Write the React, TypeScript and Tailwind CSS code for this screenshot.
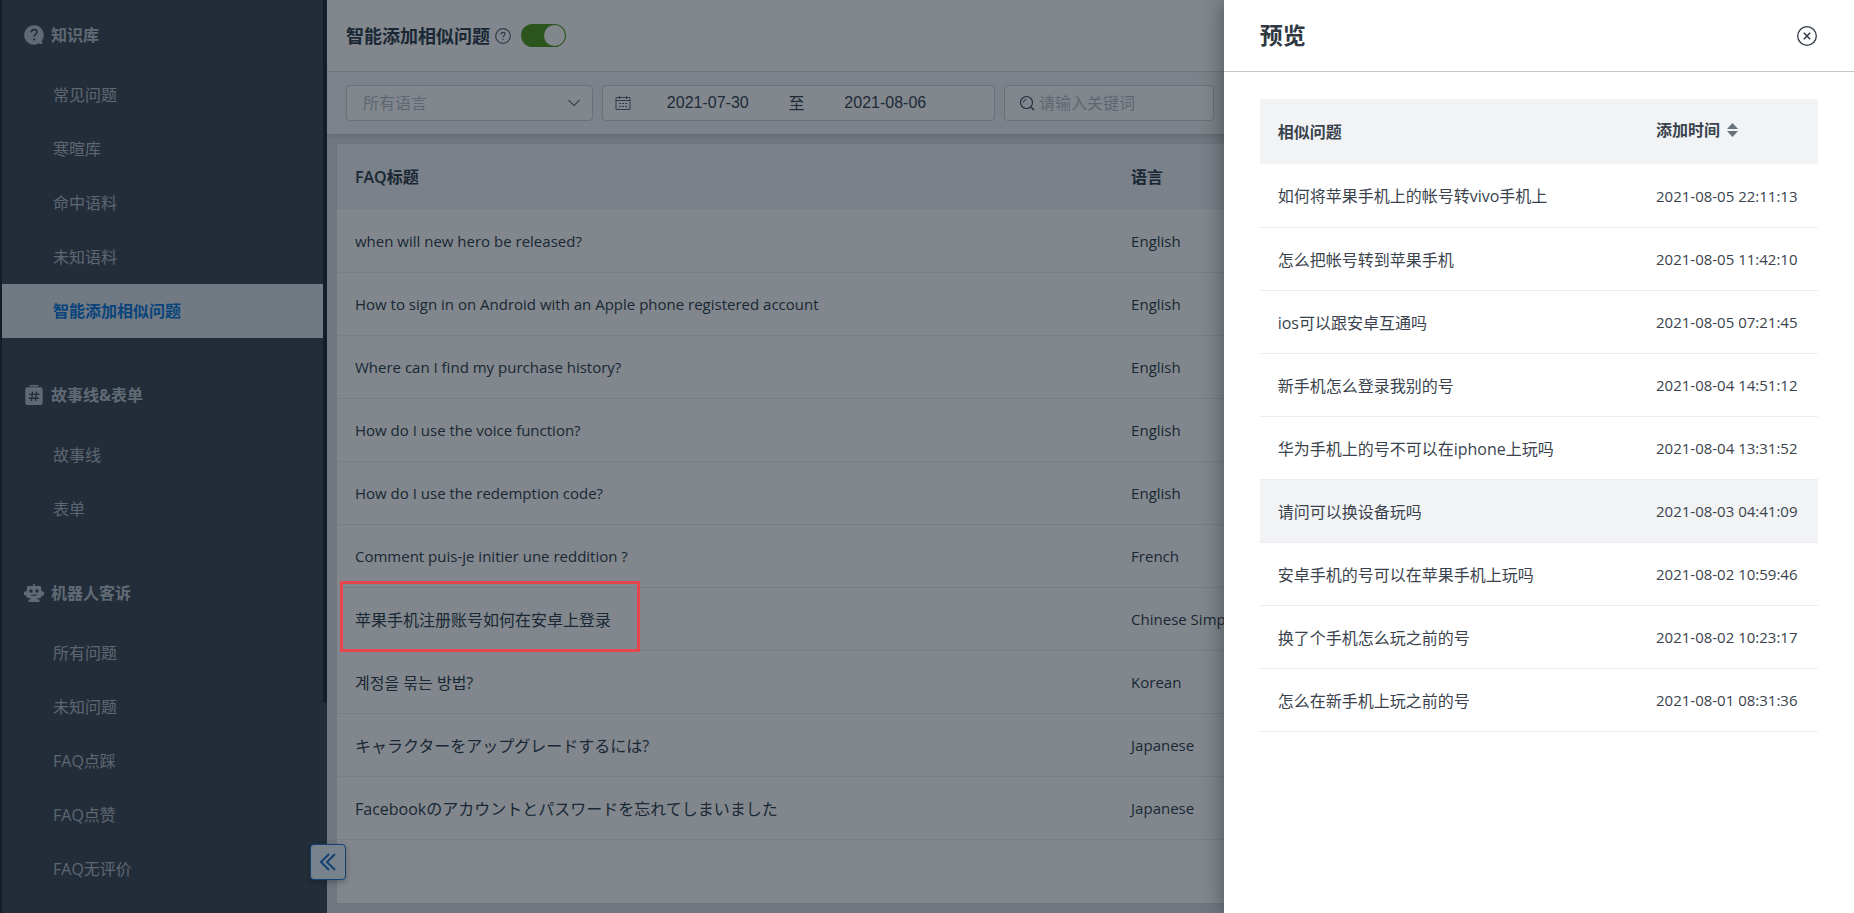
import React, { useState } from "react";

interface NavGroup {
  title: string;
  icon: React.ReactNode;
  items: string[];
}

interface FaqRow {
  title: string;
  language: string;
  cjk?: boolean;
  marked?: boolean;
}

const QuestionIcon = () => (
  <svg viewBox="0 0 20 20" className="size-5 shrink-0" aria-hidden="true">
    <path fill="currentColor" d="M10 .3a9.7 9.7 0 1 0 4.6 18.2l3.9.8-.7-3.5A9.7 9.7 0 0 0 10 .3z" />
    <path d="M7.2 7.4C7.3 5.6 8.4 4.6 10.1 4.6c1.700 0 2.900 1 2.900 2.500 0 2.200-2.900 2.300-2.900 4.500" fill="none" stroke="#424b56" strokeWidth="1.6" />
    <circle cx="10.1" cy="14.4" r="1.1" fill="#424b56" />
  </svg>
);

const StoryIcon = () => (
  <svg viewBox="0 0 20 20" className="size-5 shrink-0" aria-hidden="true">
    <path fill="currentColor" d="M5.500 0h9v1.600h-9zM3.500 2.300h13A2.200 2.200 0 0 1 18.700 4.500v13.300A2.200 2.200 0 0 1 16.500 20h-13a2.200 2.200 0 0 1-2.200-2.200V4.500a2.200 2.200 0 0 1 2.200-2.200z" />
    <path d="M8.600 6.500 7.400 16M12.700 6.500 11.500 16M5 9.400h10.500M4.600 13.200h10.500" fill="none" stroke="#424b56" strokeWidth="1.4" />
  </svg>
);

const RobotIcon = () => (
  <svg viewBox="0 0 20 20" className="size-5 shrink-0" aria-hidden="true">
    <path fill="currentColor" d="M9.200 1h1.600v2H16a1 1 0 0 1 1 1v3.600h1.200v1.200H20v3.400h-1.800v1.200H17V14a1 1 0 0 1-1 1h-2.400v1.600h1.900V19h-11v-2.400h1.900V15H4a1 1 0 0 1-1-1v-.6H1.800v-1.200H0V8.800h1.800V7.600H3V4a1 1 0 0 1 1-1h5.200z" />
    <circle cx="7" cy="8" r="1.7" fill="#424b56" />
    <circle cx="13" cy="8" r="1.7" fill="#424b56" />
    <path d="M7 12.200h6" stroke="#424b56" strokeWidth="1" />
  </svg>
);

const navGroups: NavGroup[] = [
  {
    title: "知识库",
    icon: <QuestionIcon />,
    items: ["常见问题", "寒暄库", "命中语料", "未知语料", "智能添加相似问题"],
  },
  { title: "故事线&表单", icon: <StoryIcon />, items: ["故事线", "表单"] },
  {
    title: "机器人客诉",
    icon: <RobotIcon />,
    items: ["所有问题", "未知问题", "FAQ点踩", "FAQ点赞", "FAQ无评价"],
  },
];

const faqRows: FaqRow[] = [
  { title: "when will new hero be released?", language: "English" },
  { title: "How to sign in on Android with an Apple phone registered account", language: "English" },
  { title: "Where can I find my purchase history?", language: "English" },
  { title: "How do I use the voice function?", language: "English" },
  { title: "How do I use the redemption code?", language: "English" },
  { title: "Comment puis-je initier une reddition ?", language: "French" },
  { title: "苹果手机注册账号如何在安卓上登录", language: "Chinese Simplified", cjk: true, marked: true },
  { title: "계정을 묶는 방법?", language: "Korean", cjk: true },
  { title: "キャラクターをアップグレードするには?", language: "Japanese", cjk: true },
  { title: "Facebookのアカウントとパスワードを忘れてしまいました", language: "Japanese", cjk: true },
];

const similarRows = [
  { question: "如何将苹果手机上的帐号转vivo手机上", time: "2021-08-05 22:11:13" },
  { question: "怎么把帐号转到苹果手机", time: "2021-08-05 11:42:10" },
  { question: "ios可以跟安卓互通吗", time: "2021-08-05 07:21:45" },
  { question: "新手机怎么登录我别的号", time: "2021-08-04 14:51:12" },
  { question: "华为手机上的号不可以在iphone上玩吗", time: "2021-08-04 13:31:52" },
  { question: "请问可以换设备玩吗", time: "2021-08-03 04:41:09" },
  { question: "安卓手机的号可以在苹果手机上玩吗", time: "2021-08-02 10:59:46" },
  { question: "换了个手机怎么玩之前的号", time: "2021-08-02 10:23:17" },
  { question: "怎么在新手机上玩之前的号", time: "2021-08-01 08:31:36" },
];

function Sidebar({ active, onSelect }: { active: string; onSelect: (name: string) => void }) {
  return (
    <aside className="flex w-[327px] shrink-0 border-l-2 border-[#202a38] bg-[#424b56]">
      <nav className="min-w-0 flex-1 overflow-hidden">
        {navGroups.map(group => (
          <section key={group.title} className="mb-[22px]">
            <h2 className="flex h-[68px] items-center gap-[7px] pt-0.5 pl-[22px] text-base font-bold text-[#bcc4cd]">
              {group.icon}
              {group.title}
            </h2>
            <ul>
              {group.items.map(item => (
                <li key={item}>
                  <a
                    href="#"
                    onClick={e => {
                      e.preventDefault();
                      onSelect(item);
                    }}
                    className={`flex h-[54px] items-center pl-[51px] text-base ${
                      item === active ? "bg-[#dee3e8] font-bold text-[#0c76dc]" : "text-[#b4bcc6]"
                    }`}
                  >
                    {item}
                  </a>
                </li>
              ))}
            </ul>
          </section>
        ))}
      </nav>
      {/* Scroll track */}
      <div className="w-1 shrink-0">
        <div className="h-[77%] rounded-b-sm bg-[#222c3a]" />
      </div>
    </aside>
  );
}

function Filters() {
  return (
    <div className="flex h-[63px] shrink-0 items-center gap-[9px] border-b border-[#c8ccd0] bg-[#f4f5f6] px-[19px] shadow-[0_2px_4px_rgba(0,0,0,0.08)]">
      <div className="relative w-[247px]">
        <select
          aria-label="所有语言"
          className="h-9 w-full appearance-none rounded border border-[#cdd0d4] bg-white px-4 text-base text-[#b9bec6]"
        >
          <option>所有语言</option>
        </select>
        <svg viewBox="0 0 14 14" className="pointer-events-none absolute top-[11px] right-3 size-3.5" fill="none" stroke="#6f7a87" aria-hidden="true">
          <path d="M1.500 4 7 9.700 12.500 4" strokeWidth="1.2" />
        </svg>
      </div>

      <div className="flex h-9 w-[393px] items-center rounded border border-[#cdd0d4] bg-white pr-8 pl-3 text-base text-[#3a4552]">
        <svg viewBox="0 0 16 16" className="size-4 shrink-0" fill="none" stroke="#5d6978" aria-hidden="true">
          <path d="M1 2.500h14v12H1zM1 5.500h14M4.500 1v3M11.500 1v3M4 8.500h2M7 8.500h2M10 8.500h2M4 11.500h2M7 11.500h2M10 11.500h2" />
        </svg>
        <input
          aria-label="开始日期"
          defaultValue="2021-07-30"
          className="min-w-0 flex-1 text-center font-['Liberation_Sans',sans-serif]"
        />
        <span className="w-6 text-center">至</span>
        <input
          aria-label="结束日期"
          defaultValue="2021-08-06"
          className="min-w-0 flex-1 text-center font-['Liberation_Sans',sans-serif]"
        />
      </div>

      <label className="flex h-9 w-[210px] items-center gap-1 rounded border border-[#cdd0d4] bg-white pl-[14px]">
        <svg viewBox="0 0 16 16" className="size-4 shrink-0" fill="none" stroke="#465261" aria-hidden="true">
          <circle cx="7.5" cy="7.5" r="6" strokeWidth="1.2" />
          <path d="m12 12 3 3" strokeWidth="1.5" />
          <path d="M4.500 7.500a3 3 0 0 1 3-3" />
        </svg>
        <input
          aria-label="请输入关键词"
          placeholder="请输入关键词"
          className="w-full min-w-0 text-base placeholder:text-[#b9bec6]"
        />
      </label>
    </div>
  );
}

function FaqTable() {
  return (
    <table className="w-full table-fixed border-collapse text-left text-[#323e4c]">
      <thead>
        <tr className="h-[65px] bg-[#f1f2f4]">
          <th className="w-[51.5%] px-[18px] text-base font-semibold">FAQ标题</th>
          <th className="px-[18px] text-base font-semibold">语言</th>
        </tr>
      </thead>
      <tbody>
        {faqRows.map(row => (
          <tr key={row.title} className="h-[63px] border-b border-[#ebedf0]">
            <td className={`relative px-[18px] pt-0.5 ${row.cjk ? "text-base" : "text-[15px]"}`}>
              {row.title}
              {row.marked && (
                <span className="pointer-events-none absolute -top-[7px] left-[3px] z-20 h-[71px] w-[300px] border-3 border-[#e6474d]" />
              )}
            </td>
            <td className="px-[18px] pt-0.5 text-[15px]">{row.language}</td>
          </tr>
        ))}
      </tbody>
    </table>
  );
}

function PreviewDrawer({ onClose }: { onClose: () => void }) {
  return (
    <aside
      role="dialog"
      aria-label="预览"
      className="absolute inset-y-0 right-0 z-30 w-[34%] bg-white shadow-[-2px_0_20px_rgba(0,0,0,0.35)]"
    >
      <header className="flex h-[72px] items-center justify-between border-b border-[#c3c7ca] px-9">
        <h2 className="text-[23px] font-bold text-[#303943]">预览</h2>
        <button type="button" aria-label="关闭" onClick={onClose}>
          <svg viewBox="0 0 22 22" className="size-[22px]" fill="none" stroke="#303943" aria-hidden="true">
            <circle cx="11" cy="11" r="9.3" strokeWidth="1.3" />
            <path d="m7.800 7.800 6.400 6.400M14.200 7.800l-6.400 6.400" strokeWidth="1.5" />
          </svg>
        </button>
      </header>

      <div className="px-9 pt-[27px]">
        <table className="w-full table-fixed border-collapse text-left text-[#3a434d]">
          <thead>
            <tr className="h-[65px] bg-[#f1f3f5]">
              <th className="px-[18px] text-base font-semibold">相似问题</th>
              <th className="w-[180px] pb-1 pl-[18px] text-base font-semibold">
                <button type="button" className="flex items-center gap-[7px]">
                  添加时间
                  <svg viewBox="0 0 11 14" className="h-3.5 w-[11px]" fill="#69737c" aria-hidden="true">
                    <path d="M5.500 0 11 6H0zM5.500 14 11 8H0z" />
                  </svg>
                </button>
              </th>
            </tr>
          </thead>
          <tbody>
            {similarRows.map((row, index) => (
              <tr
                key={row.question}
                className={`h-[63px] border-b border-[#ebedf0] ${index === 5 ? "bg-[#f1f3f5]" : ""}`}
              >
                <td className="px-[18px] pt-0.5 text-base">{row.question}</td>
                <td className="pt-0.5 pl-[18px] text-[15px] whitespace-nowrap">{row.time}</td>
              </tr>
            ))}
          </tbody>
        </table>
      </div>
    </aside>
  );
}

export default function App() {
  const [active, setActive] = useState("智能添加相似问题");
  const [enabled, setEnabled] = useState(true);
  const [drawerOpen, setDrawerOpen] = useState(true);

  return (
    <div
      lang="zh-CN"
      className="relative flex h-screen overflow-hidden bg-[#dadce1] font-['Open_Sans','Noto_Sans_CJK_SC','Noto_Sans_CJK_KR',sans-serif]"
    >
      <Sidebar active={active} onSelect={setActive} />

      <main className="flex min-w-0 flex-1 flex-col">
        <header className="flex h-[72px] shrink-0 items-center border-b border-[#dcdee1] bg-white px-[19px]">
          <h1 className="text-lg font-bold text-[#323e4c]">智能添加相似问题</h1>
          <svg viewBox="0 0 16 16" className="ml-[5px] size-4" fill="none" stroke="#5d6978" aria-hidden="true">
            <circle cx="8" cy="8" r="7.3" strokeWidth="1.2" />
            <path d="M6 6.400C6 5 6.800 4.300 8 4.300s2 .7 2 1.800c0 1.500-2 1.600-2 3.200M8 10.700V12" strokeWidth="1.2" />
          </svg>
          <input
            type="checkbox"
            role="switch"
            aria-label="智能添加相似问题"
            checked={enabled}
            onChange={e => setEnabled(e.target.checked)}
            className="ml-[10px] flex h-[23px] w-[45px] appearance-none items-center rounded-full bg-gray-300 p-px before:size-[21px] before:rounded-full before:bg-white checked:justify-end checked:bg-[#559a1e]"
          />
        </header>

        <Filters />

        <div className="mx-[10px] mt-[9px] mb-[10px] min-h-0 flex-1 bg-white">
          <FaqTable />
        </div>
      </main>

      <button
        type="button"
        aria-label="收起菜单"
        className="absolute bottom-[33px] left-[310px] flex size-9 items-center justify-center rounded border border-[#2272cc] bg-[#edf4fc] text-[#2272cc] shadow-[0_2px_6px_rgba(0,0,0,0.3)]"
      >
        <svg viewBox="0 0 18 18" className="size-[18px]" fill="none" stroke="currentColor" strokeWidth="2" aria-hidden="true">
          <path d="M10 1 2 9l8 8M16 1 8 9l8 8" />
        </svg>
      </button>

      {drawerOpen && (
        <>
          <div className="absolute inset-0 z-10 bg-[#030f1c]/50" onClick={() => setDrawerOpen(false)} />
          <PreviewDrawer onClose={() => setDrawerOpen(false)} />
        </>
      )}
    </div>
  );
}
